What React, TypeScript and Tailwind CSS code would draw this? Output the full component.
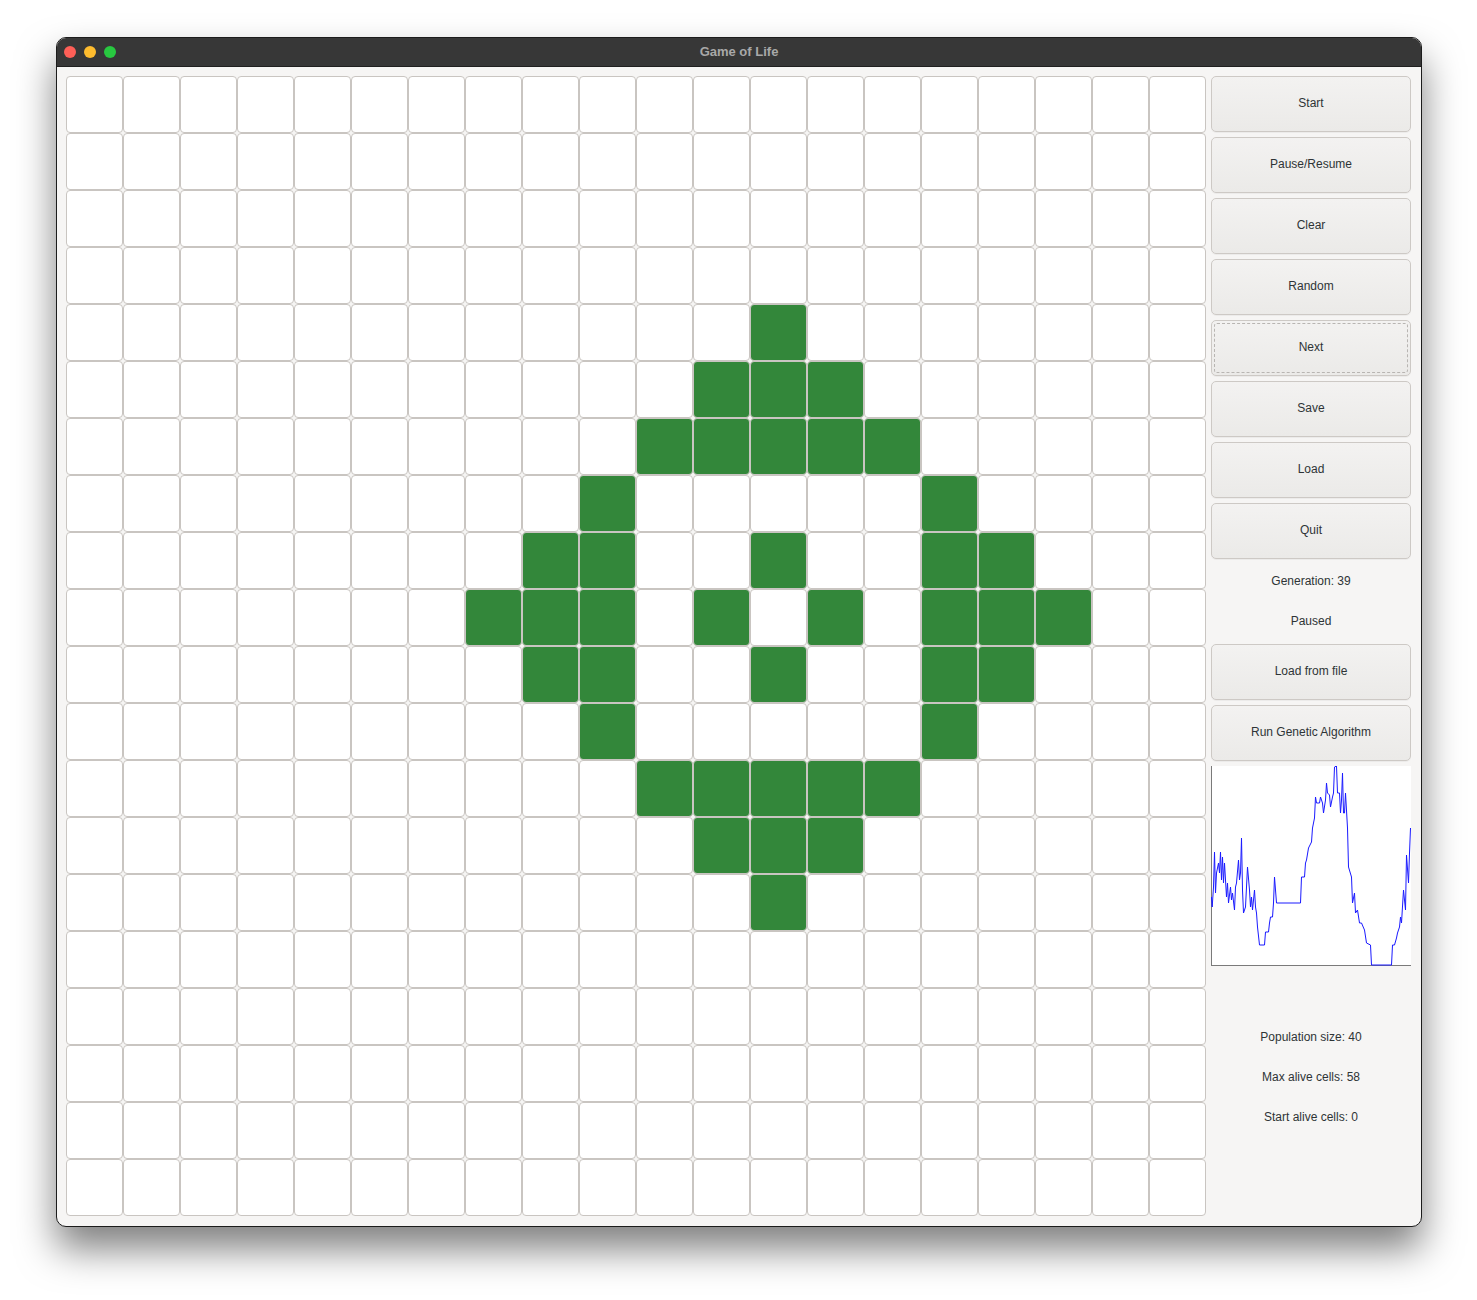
const alive: Record<number, number[]> = {
  4: [12],
  5: [11, 12, 13],
  6: [10, 11, 12, 13, 14],
  7: [9, 15],
  8: [8, 9, 12, 15, 16],
  9: [7, 8, 9, 11, 13, 15, 16, 17],
  10: [8, 9, 12, 15, 16],
  11: [9, 15],
  12: [10, 11, 12, 13, 14],
  13: [11, 12, 13],
  14: [12],
}

// population history, chart-local coords (200x200)
const history = [
  [0, 131], [0.7, 141], [2, 121], [3, 86], [4, 127], [5, 107], [7, 97], [8, 107], [9, 86], [10, 114],
  [11, 91], [12, 117], [13, 97], [15, 131], [16, 117], [17, 137], [19, 121], [20, 134], [21, 127],
  [23, 144], [24, 121], [25, 117], [27, 94], [28, 114], [29, 107], [30, 72], [31, 124], [32, 147],
  [34, 141], [35, 121], [36, 101], [38, 124], [39, 141], [40, 131], [41, 144], [43, 124], [44, 141],
  [45, 147], [46, 161], [48, 179], [53, 179], [54, 166], [57, 166], [58, 157], [59, 151], [61, 151],
  [62, 137], [63, 111], [65, 137], [89, 137], [90, 111], [93, 111], [94, 97], [95, 94], [97, 82],
  [100, 76], [101, 62], [103, 52], [104, 31], [105, 37], [108, 37], [109, 31], [111, 37], [112, 47],
  [114, 34], [115, 17], [116, 27], [118, 29], [119, 41], [121, 31], [122, 27], [123, 1], [125, 0],
  [126, 27], [128, 27], [129, 47], [130, 34], [131, 7], [132, 47], [133, 47], [134, 27], [136, 62],
  [137, 101], [140, 111], [141, 137], [143, 127], [144, 147], [146, 144], [148, 157], [150, 157],
  [153, 164], [155, 177], [159, 179], [160, 199], [180, 199], [181, 179], [183, 179], [185, 172],
  [186, 167], [188, 161], [189, 151], [190, 157], [192, 124], [194, 144], [195, 89], [197, 117],
  [198, 87], [199, 62],
]

const Button = ({ label, focused = false }: { label: string; focused?: boolean }) => (
  <div className="h-[56px] rounded-[5px] border border-[#cdc9c5] bg-gradient-to-b from-[#f3f2f1] to-[#ebeae8] p-[2px] shadow-[0_1px_0_rgba(0,0,0,0.04)]">
    <div
      className={
        "h-full flex items-center justify-center pb-[2px] rounded-[3px] text-[12px] text-[#2e3436] " +
        (focused ? "border border-dashed border-[#b8b5b2]" : "border border-transparent")
      }
    >
      {label}
    </div>
  </div>
)

const Label = ({ text }: { text: string }) => (
  <div className="h-[35px] flex items-center justify-center pb-[2px] text-[12px] text-[#2e3436]">{text}</div>
)

const Chart = () => (
  <div className="h-[200px] bg-white">
    <svg width="200" height="200" viewBox="0 0 200 200" className="block">
      <line x1="0.5" y1="0" x2="0.5" y2="200" stroke="#7a7a7a" strokeWidth="1" />
      <line x1="0" y1="199.5" x2="200" y2="199.5" stroke="#7a7a7a" strokeWidth="1" />
      <polyline
        points={history.map(([x, y]) => `${x + 0.5},${y}`).join(" ")}
        fill="none"
        stroke="#1a1aff"
        strokeWidth="1"
      />
    </svg>
  </div>
)

export default function App() {
  return (
    <div className="min-h-[1300px] bg-white pt-[37px] pl-[56px]" style={{ fontFamily: '"Liberation Sans", Arial, sans-serif' }}>
      <div className="w-[1366px] h-[1190px] rounded-[10px] border border-[#1c1c1c] overflow-hidden bg-[#f6f5f4] shadow-[0_22px_38px_rgba(0,0,0,0.5)] flex flex-col">
        {/* title bar */}
        <div className="h-[29px] shrink-0 bg-[#373737] border-b border-[#1f1f1f] flex items-center relative">
          <div className="flex gap-[8px] pl-[7px]">
            <div className="w-[12px] h-[12px] rounded-full bg-[#fe5f57]" />
            <div className="w-[12px] h-[12px] rounded-full bg-[#febc2e]" />
            <div className="w-[12px] h-[12px] rounded-full bg-[#28c840]" />
          </div>
          <div className="absolute inset-0 flex items-center justify-center text-[13px] font-bold text-[#a8a8a8]">
            Game of Life
          </div>
        </div>
        {/* body */}
        <div className="flex gap-[5px] pl-[9px] pt-[9px]">
          <div className="grid grid-cols-[repeat(20,57px)] grid-rows-[repeat(20,57px)]">
            {Array.from({ length: 400 }, (_, i) => {
              const r = Math.floor(i / 20)
              const c = i % 20
              const on = alive[r]?.includes(c)
              return (
                <div
                  key={i}
                  className={
                    "rounded-[4px] border border-[#c9c5c1] " + (on ? "bg-[#33873a]" : "bg-white")
                  }
                />
              )
            })}
          </div>
          <div className="w-[200px] flex flex-col gap-[5px]">
            <Button label="Start" />
            <Button label="Pause/Resume" />
            <Button label="Clear" />
            <Button label="Random" />
            <Button label="Next" focused />
            <Button label="Save" />
            <Button label="Load" />
            <Button label="Quit" />
            <Label text="Generation: 39" />
            <Label text="Paused" />
            <Button label="Load from file" />
            <Button label="Run Genetic Algorithm" />
            <Chart />
            <div className="h-[44px]" />
            <Label text="Population size: 40" />
            <Label text="Max alive cells: 58" />
            <Label text="Start alive cells: 0" />
          </div>
        </div>
      </div>
    </div>
  )
}
